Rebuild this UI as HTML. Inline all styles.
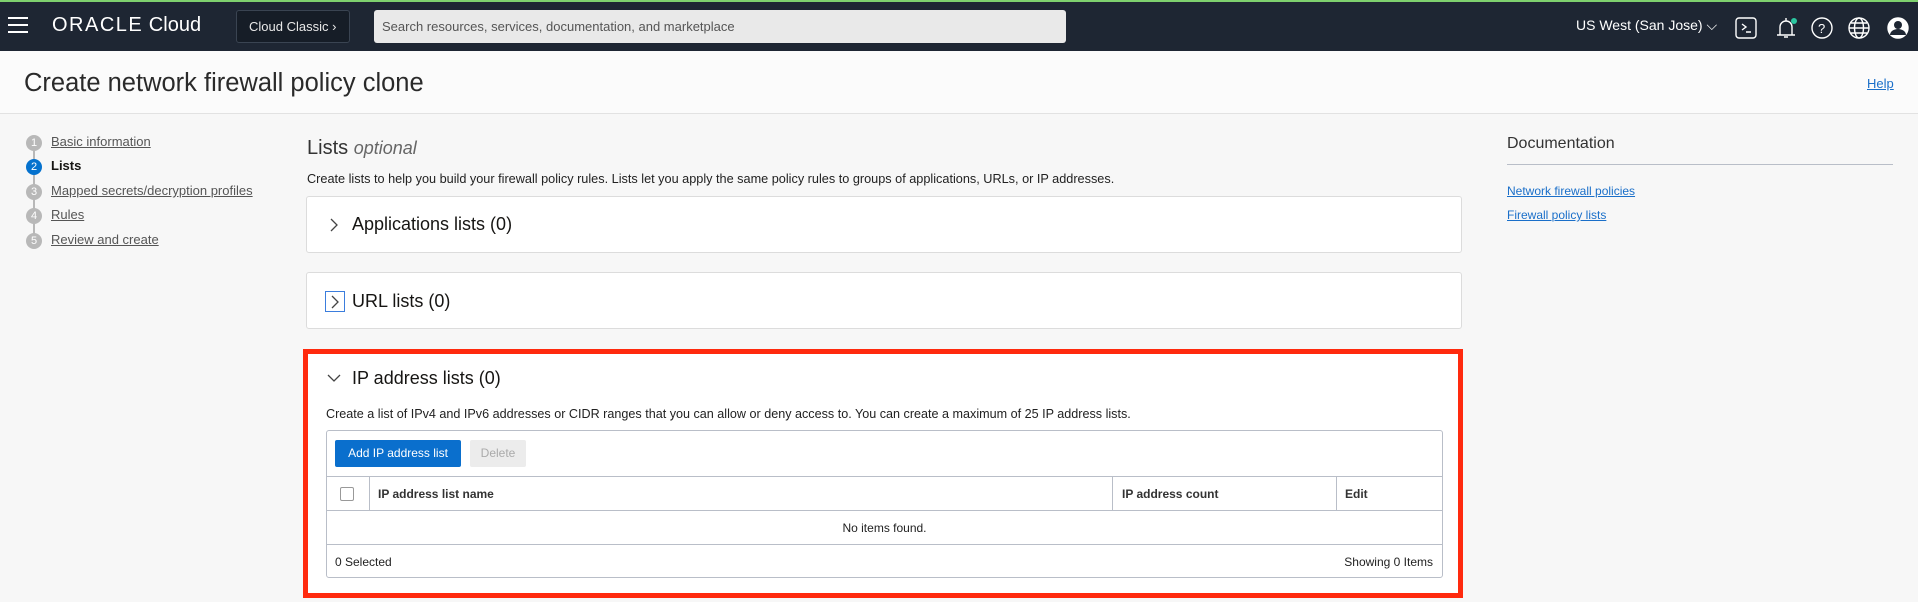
<!DOCTYPE html>
<html><head><meta charset="utf-8"><style>
*{box-sizing:border-box;margin:0;padding:0}
body{width:1918px;height:602px;overflow:hidden;background:#f7f7f7;font-family:"Liberation Sans",Arial,sans-serif;color:#161513;position:relative}
.a{position:absolute}
.hdr{left:0;top:0;width:1918px;height:51px;background:#1e2633;border-top:2px solid #7ed16e}
.lnk{color:#1a6fc9;text-decoration:underline}
.step{left:26px;width:16px;height:16px;border-radius:50%;background:#b8b8b8;color:#fff;font-size:11px;text-align:center;line-height:16px}
.stxt{left:51px;font-size:13px;color:#555;text-decoration:underline}
.panel{left:306px;width:1156px;background:#fff;border:1px solid #dcdcdc;border-radius:3px}
.ptitle{font-size:18px;color:#161513}
.th{font-size:12px;font-weight:bold;color:#333}
</style></head><body>
<div class="a hdr">
 <svg class="a" style="left:8px;top:14px" width="22" height="18"><path d="M0 2h20M0 9h20M0 16h20" stroke="#fff" stroke-width="2"/></svg>
 <div class="a" style="left:52px;top:12px;color:#fff;font-size:20px"><span style="letter-spacing:1.5px">ORACLE</span> Cloud</div>
 <div class="a" style="left:236px;top:8px;width:114px;height:33px;border:1px solid #3a4452;border-radius:3px;color:#e8e8e8;font-size:13px;line-height:31px;padding-left:12px;background:#161d27">Cloud Classic ›</div>
 <div class="a" style="left:374px;top:8px;width:692px;height:33px;background:#e9e9e9;border-radius:3px;color:#555;font-size:13px;line-height:33px;padding-left:8px">Search resources, services, documentation, and marketplace</div>
 <div class="a" style="left:1576px;top:15px;color:#fff;font-size:14px">US West (San Jose) ⌵</div>
 <svg class="a" style="left:1735px;top:14px" width="180" height="24" fill="none" stroke="#fff" stroke-width="1.4">
  <rect x="1" y="2" width="20" height="20" rx="3"/><path d="M7 8l4 3-4 3M11 16h5"/>
  <path d="M42 19h18M45 19v-8a6 6 0 0 1 12 0v8M49 21h4M51 2v3"/><circle cx="59" cy="5" r="3" fill="#2bc6a0" stroke="none"/>
  <circle cx="87" cy="12" r="10"/><text x="83" y="17" fill="#fff" stroke="none" font-size="13" font-family="Liberation Sans">?</text>
  <circle cx="124" cy="12" r="10"/><ellipse cx="124" cy="12" rx="4.5" ry="10"/><path d="M114 12h20M116 7h16M116 17h16"/>
  <circle cx="163" cy="12" r="10" fill="#fff"/><circle cx="163" cy="9" r="4" fill="#1e2633" stroke="none"/><path d="M155 19a8 6 0 0 1 16 0" fill="#1e2633" stroke="none"/>
 </svg>
</div>
<div class="a" style="left:0;top:51px;width:1918px;height:63px;background:#fbfbfb;border-bottom:1px solid #e2e2e2"></div>
<div class="a" style="left:24px;top:69px;font-size:25.5px;color:#2a2a2a">Create network firewall policy clone</div>
<div class="a lnk" style="left:1867px;top:76px;font-size:13px">Help</div>

<div class="a" style="left:33px;top:143px;width:2px;height:98px;background:#b8b8b8"></div>
<div class="a step" style="top:135px">1</div><div class="a stxt" style="top:134px">Basic information</div>
<div class="a step" style="top:159px;background:#0572ce">2</div><div class="a stxt" style="top:158px;color:#161513;text-decoration:none;font-weight:bold">Lists</div>
<div class="a step" style="top:184px">3</div><div class="a stxt" style="top:183px">Mapped secrets/decryption profiles</div>
<div class="a step" style="top:208px">4</div><div class="a stxt" style="top:207px">Rules</div>
<div class="a step" style="top:233px">5</div><div class="a stxt" style="top:232px">Review and create</div>

<div class="a" style="left:307px;top:137px;font-size:20px;color:#333">Lists <i style="font-size:18px;color:#666">optional</i></div>
<div class="a" style="left:307px;top:172px;font-size:12.7px;color:#222">Create lists to help you build your firewall policy rules. Lists let you apply the same policy rules to groups of applications, URLs, or IP addresses.</div>

<div class="a panel" style="top:196px;height:57px"><svg class="a" style="left:21px;top:21px" width="12" height="14"><path d="M3 1l6 6-6 6" stroke="#444" stroke-width="1.3" fill="none"/></svg><div class="a ptitle" style="left:45px;top:17px">Applications lists (0)</div></div>
<div class="a panel" style="top:272px;height:57px"><div class="a" style="left:18px;top:18px;width:20px;height:21px;border:1px solid #3b7ddd"></div><svg class="a" style="left:22px;top:22px" width="12" height="14"><path d="M3 1l6 6-6 6" stroke="#444" stroke-width="1.3" fill="none"/></svg><div class="a ptitle" style="left:45px;top:18px">URL lists (0)</div></div>

<div class="a" style="left:303px;top:349px;width:1160px;height:249px;background:#fff;border:5px solid #ff2a0e"></div>
<svg class="a" style="left:326px;top:372px" width="16" height="12"><path d="M2 3l6 6 6-6" stroke="#444" stroke-width="1.3" fill="none"/></svg>
<div class="a ptitle" style="left:352px;top:368px">IP address lists (0)</div>
<div class="a" style="left:326px;top:407px;font-size:12.6px;color:#222">Create a list of IPv4 and IPv6 addresses or CIDR ranges that you can allow or deny access to. You can create a maximum of 25 IP address lists.</div>
<div class="a" style="left:326px;top:430px;width:1117px;height:148px;border:1px solid #b9bec8;border-radius:3px"></div>
<div class="a" style="left:335px;top:440px;width:126px;height:27px;background:#0a6fcd;border-radius:2px;color:#fff;font-size:12px;text-align:center;line-height:27px">Add IP address list</div>
<div class="a" style="left:470px;top:440px;width:56px;height:27px;background:#ececec;border-radius:2px;color:#aaa;font-size:12px;text-align:center;line-height:27px">Delete</div>
<div class="a" style="left:326px;top:476px;width:1117px;height:1px;background:#b9bec8"></div>
<div class="a" style="left:326px;top:510px;width:1117px;height:1px;background:#b9bec8"></div>
<div class="a" style="left:326px;top:544px;width:1117px;height:1px;background:#b9bec8"></div>
<div class="a" style="left:369px;top:476px;width:1px;height:34px;background:#b9bec8"></div>
<div class="a" style="left:1112px;top:476px;width:1px;height:34px;background:#b9bec8"></div>
<div class="a" style="left:1336px;top:476px;width:1px;height:34px;background:#b9bec8"></div>
<div class="a" style="left:340px;top:487px;width:14px;height:14px;border:1px solid #999;border-radius:2px;background:#fff"></div>
<div class="a th" style="left:378px;top:487px">IP address list name</div>
<div class="a th" style="left:1122px;top:487px">IP address count</div>
<div class="a th" style="left:1345px;top:487px">Edit</div>
<div class="a" style="left:326px;top:521px;width:1117px;text-align:center;font-size:12px;color:#222">No items found.</div>
<div class="a" style="left:335px;top:555px;font-size:12px;color:#222">0 Selected</div>
<div class="a" style="left:1300px;top:555px;width:133px;text-align:right;font-size:12px;color:#222">Showing 0 Items</div>

<div class="a" style="left:1507px;top:135px;font-size:16px;color:#333">Documentation</div>
<div class="a" style="left:1507px;top:164px;width:386px;height:1px;background:#b9bec8"></div>
<div class="a lnk" style="left:1507px;top:184px;font-size:12px">Network firewall policies</div>
<div class="a lnk" style="left:1507px;top:208px;font-size:12px">Firewall policy lists</div>
</body></html>
